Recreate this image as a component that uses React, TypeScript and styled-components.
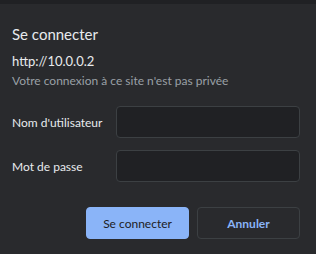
import React from "react";
import styled, { createGlobalStyle } from "styled-components";

const GlobalStyle = createGlobalStyle`
  html, body {
    margin: 0;
    padding: 0;
    background: #292a2d;
  }
  body {
    font-family: Lato, "Open Sans", sans-serif;
  }
`;

const Frame = styled.div`
  width: 316px;
  height: 254px;
  background: #292a2d;
  display: flex;
  flex-direction: column;
  overflow: hidden;
`;

const TopStrip = styled.div`
  height: 4px;
  background: #202124;
`;

const Body = styled.div`
  padding: 18px 16px 0 12px;
  display: flex;
  flex-direction: column;
`;

const Title = styled.h1`
  margin: 0;
  font-size: 15px;
  font-weight: 400;
  line-height: 24px;
  color: #e8eaed;
`;

const Origin = styled.div`
  margin-top: 6px;
  font-size: 13px;
  line-height: 18px;
  color: #e8eaed;
`;

const Note = styled.div`
  margin-top: 2px;
  font-size: 12px;
  line-height: 18px;
  color: #9aa0a6;
`;

const Fields = styled.div`
  margin-top: 16px;
  display: grid;
  grid-template-columns: 104px minmax(0, 1fr);
  row-gap: 12px;
  align-items: center;
`;

const Label = styled.label`
  font-size: 12px;
  white-space: nowrap;
  color: #e8eaed;
`;

const Input = styled.input`
  width: 100%;
  min-width: 0;
  height: 32px;
  box-sizing: border-box;
  background: #202124;
  border: 1px solid #3c4043;
  border-radius: 4px;
  color: #e8eaed;
  font: inherit;
  padding: 0 8px;
  outline: none;
`;

const Actions = styled.div`
  margin-top: 25px;
  display: flex;
  justify-content: flex-end;
  gap: 8px;
`;

const Button = styled.button<{ $primary?: boolean }>`
  width: 103px;
  height: 32px;
  box-sizing: border-box;
  border-radius: 4px;
  font-family: inherit;
  font-size: 12px;
  font-weight: ${({ $primary }) => ($primary ? 400 : 700)};
  background: ${({ $primary }) => ($primary ? "#8ab4f8" : "transparent")};
  color: ${({ $primary }) => ($primary ? "#202124" : "#8ab4f8")};
  border: 1px solid ${({ $primary }) => ($primary ? "#8ab4f8" : "#3c4043")};
`;

export default function App() {
  return (
    <>
      <GlobalStyle />
      <Frame>
        <TopStrip />
        <Body>
          <Title>Se connecter</Title>
          <Origin>http://10.0.0.2</Origin>
          <Note>Votre connexion à ce site n'est pas privée</Note>
          <Fields>
            <Label htmlFor="user">Nom d'utilisateur</Label>
            <Input id="user" type="text" />
            <Label htmlFor="pass">Mot de passe</Label>
            <Input id="pass" type="password" />
          </Fields>
          <Actions>
            <Button $primary>Se connecter</Button>
            <Button>Annuler</Button>
          </Actions>
        </Body>
      </Frame>
    </>
  );
}
